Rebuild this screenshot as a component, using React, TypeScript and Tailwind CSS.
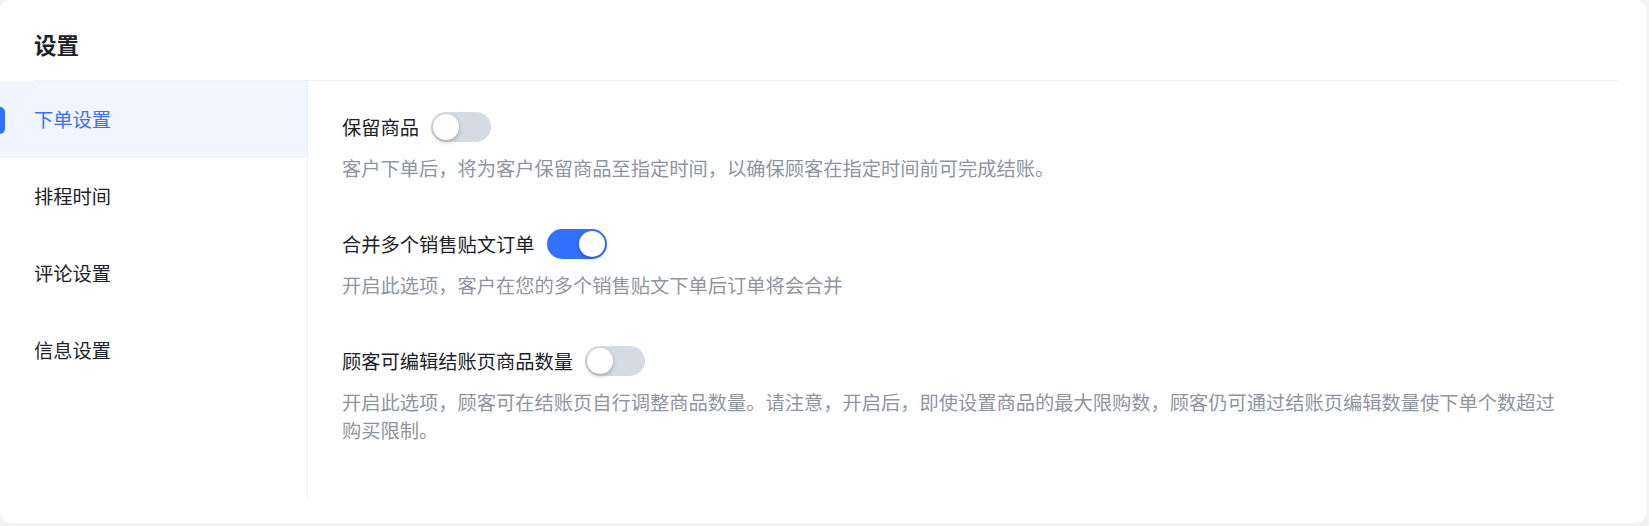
import React, { useState } from "react";

const font = "font-['Noto_Sans_CJK_SC','Noto_Sans',sans-serif]";

const menuItems = ["下单设置", "排程时间", "评论设置", "信息设置"];

const Toggle = ({ on, onChange }: { on: boolean; onChange: () => void }) => (
  <button
    onClick={onChange}
    className={`flex h-[30px] w-[60px] shrink-0 items-center rounded-full p-[2px] ${
      on ? "justify-end bg-[#3370ff]" : "justify-start bg-[#d6dae5]"
    }`}
  >
    <span className="h-[26px] w-[26px] rounded-full bg-white shadow-[0_2px_4px_rgba(0,0,0,0.25)]" />
  </button>
);

const SettingRow = ({
  label,
  desc,
  on,
  onChange,
}: {
  label: string;
  desc: string;
  on: boolean;
  onChange: () => void;
}) => (
  <div className="flex flex-col">
    <div className="flex h-[30px] items-center gap-[12px]">
      <span className="text-[19.25px] leading-[30px] text-[#1f2329]">{label}</span>
      <Toggle on={on} onChange={onChange} />
    </div>
    <p className="mt-[12px] max-w-[1222px] text-[19.25px] leading-[28px] text-[#8f959e]">
      {desc}
    </p>
  </div>
);

export default function App() {
  const [active, setActive] = useState(0);
  const [keep, setKeep] = useState(false);
  const [merge, setMerge] = useState(true);
  const [editQty, setEditQty] = useState(false);

  return (
    <div className={`h-[526px] w-full bg-[#f2f3f6] ${font}`}>
      <div className="flex h-[523px] w-[1646px] flex-col rounded-[10px] bg-white">
        <div className="flex h-[80px] items-center pl-[34px] pt-[8px]">
          <h1 className="text-[22.5px] font-bold leading-none text-[#1f2329]">设置</h1>
        </div>
        <div className="flex h-[420px] border-t border-[#eef0f5] ml-[34px] mr-[28px]">
          <div className="-ml-[34px] flex w-[342px] shrink-0 pl-0">
            <ul className="flex w-[308px] flex-col border-r border-[#eef0f5]">
              {menuItems.map((item, i) => (
                <li
                  key={item}
                  onClick={() => setActive(i)}
                  className={`relative flex h-[77px] cursor-pointer items-center pl-[34px] text-[19.25px] ${
                    active === i ? "bg-[#f0f6ff] text-[#3a70f5]" : "text-[#1f2329]"
                  }`}
                >
                  {active === i && (
                    <span className="absolute left-0 top-[26px] h-[27px] w-[5px] rounded-r-full bg-[#3370ff]" />
                  )}
                  {item}
                </li>
              ))}
            </ul>
          </div>
          <div className="flex flex-1 flex-col gap-[47px] pt-[31px]">
            <SettingRow
              label="保留商品"
              desc="客户下单后，将为客户保留商品至指定时间，以确保顾客在指定时间前可完成结账。"
              on={keep}
              onChange={() => setKeep(!keep)}
            />
            <SettingRow
              label="合并多个销售贴文订单"
              desc="开启此选项，客户在您的多个销售贴文下单后订单将会合并"
              on={merge}
              onChange={() => setMerge(!merge)}
            />
            <SettingRow
              label="顾客可编辑结账页商品数量"
              desc="开启此选项，顾客可在结账页自行调整商品数量。请注意，开启后，即使设置商品的最大限购数，顾客仍可通过结账页编辑数量使下单个数超过购买限制。"
              on={editQty}
              onChange={() => setEditQty(!editQty)}
            />
          </div>
        </div>
      </div>
    </div>
  );
}
